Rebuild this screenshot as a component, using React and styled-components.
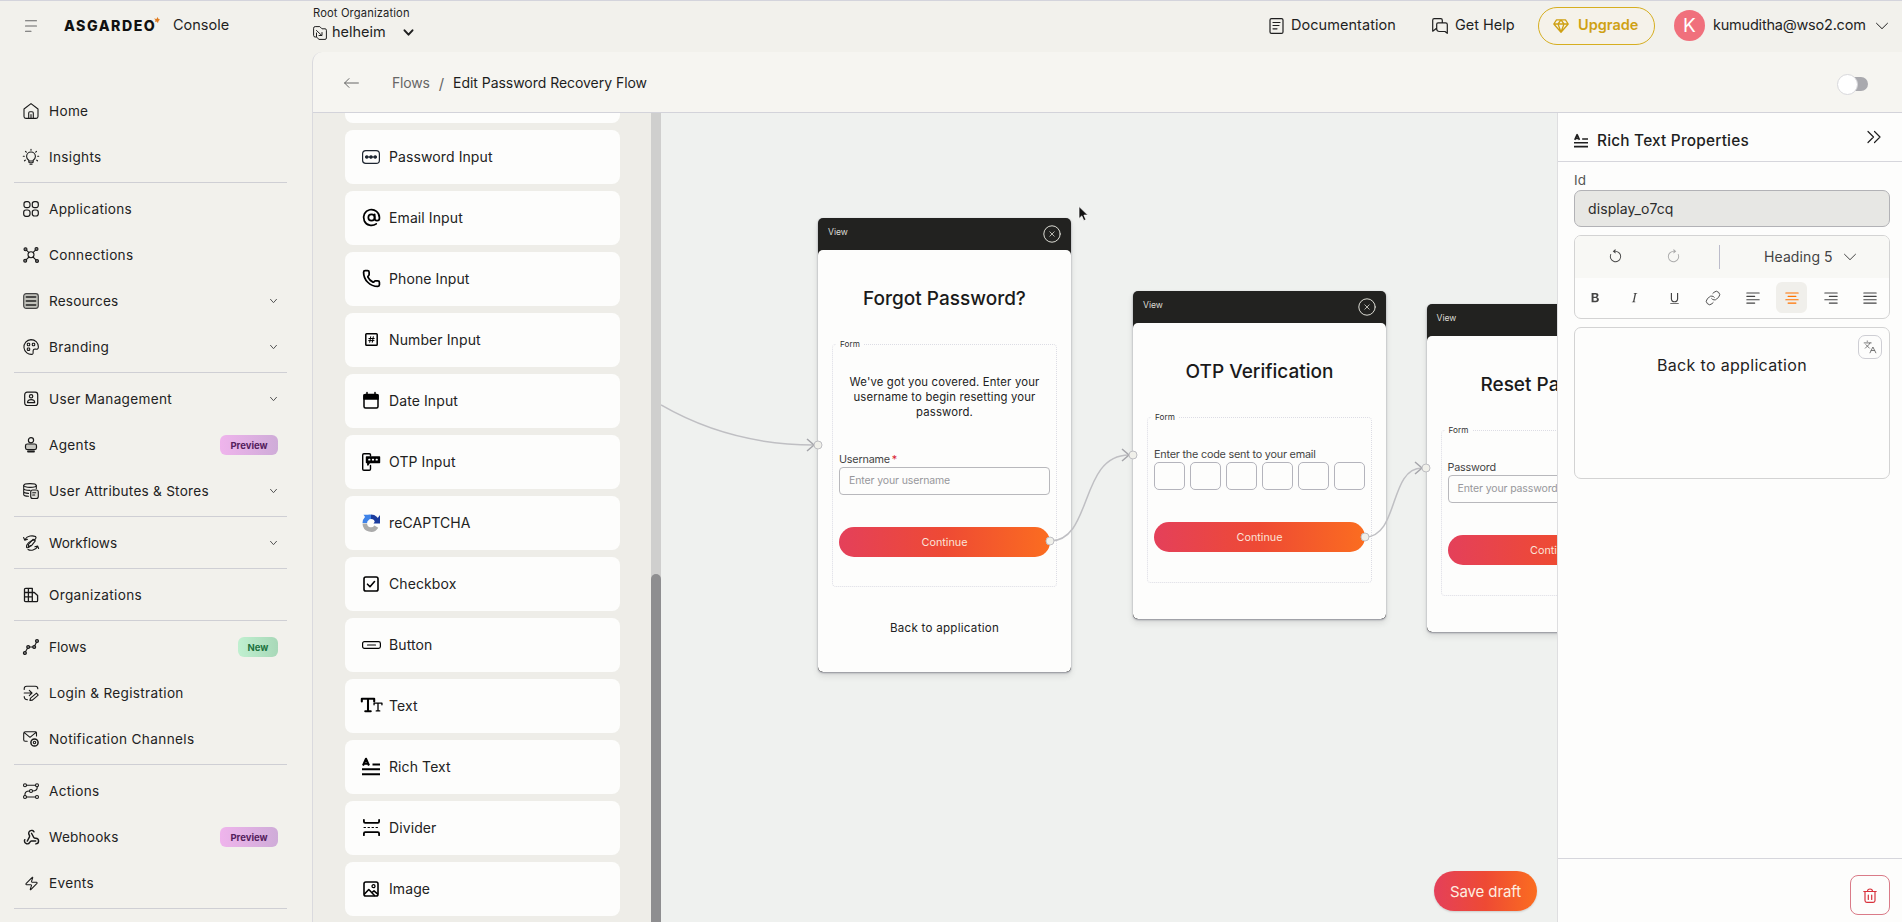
import React from 'react';
import styled, { createGlobalStyle, css } from 'styled-components';
import { Webhook, AtSign, Phone, Zap, Link as LinkIcon, Languages } from 'lucide-react';
import {
  BsArrowCounterclockwise, BsArrowClockwise, BsTypeBold, BsTypeItalic, BsTypeUnderline,
  BsTextLeft, BsTextCenter, BsTextRight, BsJustify,
} from 'react-icons/bs';
import { PiTextTBold } from 'react-icons/pi';

const Global = createGlobalStyle`
  * { box-sizing: border-box; }
  html, body { margin: 0; height: 100%; overflow: hidden; }
  body { font-family: Inter, "Liberation Sans", sans-serif; font-size: 14px; color: #1f1f1f; background: #f2f1ec; }
  #root { height: 100%; }
  svg { display: block; flex: none; overflow: visible; }
`;

const Page = styled.div`
  height: 922px; width: 1902px; display: flex; flex-direction: column;
  background: #f2f1ec; border-top: 1px solid #d4d4dc; overflow: hidden;
`;
const Txt = styled.span`
  white-space: nowrap; line-height: 1.25;
  font-size: ${p => p.$s || 14}px;
  letter-spacing: ${p => p.$ls || 0}px;
  font-weight: ${p => p.$w || 400};
  color: ${p => p.$c || 'inherit'};
`;

/* ---------- header ---------- */
const Header = styled.header`height: 51px; flex: none; display: flex; align-items: center;`;
const Brand = styled.div`width: 313px; display: flex; align-items: center; padding-left: 25px; padding-bottom: 2px;`;
const Logo = styled.div`margin-left: 27px; width: 99px; display: flex; align-items: center; color: #111; svg { margin: -12px 0 0 -2px; }`;
const Console = styled.div`margin-left: 10px; display: flex;`;
const Org = styled.div`width: 110px; display: flex; flex-direction: column; gap: 3px; padding-bottom: 5px;`;
const OrgRow = styled.div`display: flex; align-items: center; gap: 5px; width: 100px; svg:last-child { margin-left: auto; }`;
const HeaderRight = styled.div`margin-left: auto; height: 100%; display: flex; align-items: center; padding: 0 14px 2px 0;`;
const HeaderLink = styled.div`display: flex; align-items: center; gap: 7px; width: ${p => p.$w}px;`;
const Upgrade = styled.div`
  width: 117px; height: 38px; border: 1.5px solid #d6ae20; border-radius: 19px; background: #f5f2ea;
  display: flex; align-items: center; gap: 9px; padding-left: 14px; color: #cfa114;
`;
const Avatar = styled.div`
  width: 31px; height: 31px; margin: 0 8px 0 19px; border-radius: 50%; background: #f0707c; color: #fff;
  display: flex; align-items: center; justify-content: center; font-size: 19px;
`;
const UserMail = styled.div`width: 163px; display: flex;`;

/* ---------- sidebar ---------- */
const Body = styled.div`flex: 1; min-height: 0; display: flex;`;
const Sidebar = styled.nav`width: 312px; flex: none; padding: 36px 25px 0 14px; overflow: hidden;`;
const NavItem = styled.div`
  height: 46px; display: flex; align-items: center; padding: 0 9px; gap: 10px; color: #222;
  > :last-child { ${p => p.$tail && css`margin-left: auto;`} }
`;
const NavIcon = styled.span`width: 16px; height: 16px; display: flex; align-items: center; justify-content: center; color: #191919;`;
const NavRule = styled.div`height: 1px; background: #cfcfd4; margin: 2px 0 3px;`;
const NavCaret = styled.span`width: 8px; color: #555; display: flex;`;
const Badge = styled.span`
  height: 20px; width: ${p => (p.$kind === 'new' ? 40 : 58)}px; border-radius: 6px;
  display: flex; align-items: center; justify-content: center;
  background: ${p => (p.$kind === 'new' ? 'linear-gradient(90deg,#c0f0d0,#a8d8b8)' : 'linear-gradient(90deg,#efb4ec,#cfacd8)')};
  color: ${p => (p.$kind === 'new' ? '#20733f' : '#54205c')};
  font-size: 9.5px; font-weight: 700;
`;

/* ---------- main ---------- */
const Main = styled.main`flex: 1; min-width: 0; display: flex; flex-direction: column; border-left: 1px solid #dadade; border-radius: 10px 0 0 0; background: #f6f5f1;`;
const Crumbs = styled.div`
  height: 61px; flex: none; display: flex; align-items: center; padding: 2px 34px 0 31px;
  border-bottom: 1px solid #d3d3da; color: #666;
`;
const CrumbText = styled.div`display: flex; margin: 0 auto 0 33px; align-items: center;`;
const Slash = styled.span`margin: 0 9px; font-size: 15px;`;
const Toggle = styled.div`width: 31px; height: 20px; display: flex; align-items: center; justify-content: flex-end; margin-top: 2px;`;
const Track = styled.div`width: 22px; height: 14px; border-radius: 0 7px 7px 0; background: #a9a9ae; display: flex; align-items: center;`;
const Knob = styled.div`width: 21px; height: 21px; flex: none; border-radius: 50%; background: #fff; border: 1px solid #d8d8dc; margin-left: -9px;`;
const Work = styled.div`flex: 1; min-height: 0; display: flex;`;

const Palette = styled.div`
  width: 338px; flex: none; background: #eeede8; padding: 0 31px 0 32px; overflow: hidden;
  display: flex; flex-direction: column; gap: 7px; justify-content: flex-end; padding-bottom: 6px;
`;
const Tile = styled.div`
  height: 54px; flex: none; border-radius: 8px; background: #fdfdfc; display: flex; align-items: center;
  padding: 0 0 0 16px; gap: 8px; color: #222;
`;
const TileIcon = styled.span`width: 20px; margin-top: -1px; display: flex; justify-content: center; color: #000;`;
const Rail = styled.div`width: 10px; flex: none; background: #cfcfce; display: flex; flex-direction: column; justify-content: flex-end;`;
const Thumb = styled.div`height: 348px; border-radius: 5px 5px 0 0; background: #8e8e90;`;

/* ---------- canvas ---------- */
const Canvas = styled.div`flex: 1; min-width: 0; position: relative; overflow: hidden; background: #eff1ef;`;
const Edges = styled.svg`position: absolute; left: 0; top: 0; z-index: 2;`;
const Node = styled.div`
  position: absolute; left: ${p => p.$x}px; top: ${p => p.$y}px; width: 253px; height: ${p => p.$h}px;
  border-radius: 5px; background: #222220; box-shadow: 0 1px 2px rgba(60,60,80,.5), 0 4px 6px rgba(60,60,60,.12);
  display: flex; flex-direction: column; overflow: hidden;
`;
const NodeHead = styled.div`
  height: 32px; flex: none; display: flex; align-items: center; justify-content: space-between; padding: 0 10px; color: #dcdcd4;
  span { margin-top: -4px; }
`;
const NodeBody = styled.div`flex: 1; background: #fdfdfc; border-radius: 5px; padding: 35px 14px 0; display: flex; flex-direction: column;`;
const Title = styled.div`height: 28px; line-height: 28px; text-align: center; font-size: 19px; font-weight: 500; color: #1a1a1a; white-space: nowrap;`;
const Form = styled.div`
  margin-top: 31px; height: ${p => p.$h}px; border: 1px dotted #dcdce4; border-radius: 4px;
  padding: 0 6px; display: flex; flex-direction: column; flex: none;
`;
const Legend = styled.div`align-self: flex-start; height: 12px; line-height: 12px; margin: -7px 0 0 -3px; padding: 0 4px; font-size: 8.2px; background: #fdfdfc; color: #333;`;
const Blurb = styled.p`margin: 25px -3px 33px; text-align: center; font-size: 11.3px; line-height: 15px; letter-spacing: .17px; color: #222; white-space: pre;`;
const Label = styled.div`height: 14px; line-height: 14px; font-size: 10.8px; color: #444; margin-top: ${p => p.$mt || 0}px; white-space: nowrap; letter-spacing: -.2px; i { color: #d8232f; font-style: normal; margin-left: 2px; }`;
const Input = styled.div`
  height: 28px; flex: none; border: 1px solid #b8b8bc; border-radius: 4px; padding-left: 9px; font-size: 10.5px;
  line-height: 26px; color: #97979b; letter-spacing: -.12px;
`;
const Digits = styled.div`height: 28px; flex: none; display: flex; justify-content: space-between;`;
const Digit = styled.div`width: 31px; border: 1px solid #b4b4bc; border-radius: 5px;`;
const Continue = styled.div`
  height: 30px; flex: none; margin-top: 32px; border-radius: 15px; color: #fbe3d8; font-size: 10.8px;
  display: flex; align-items: center; justify-content: center; background: linear-gradient(90deg, #e4405a 0%, #ee4a34 50%, #fb6d20 100%);
`;
const BackText = styled.div`margin-top: 34px; text-align: center; font-size: 11.6px; letter-spacing: .26px; line-height: 14px; color: #222;`;
const SaveDraft = styled.div`
  position: absolute; right: 20px; bottom: 11px; width: 103px; height: 40px; border-radius: 20px; z-index: 3;
  display: flex; align-items: center; justify-content: center; color: #fdeee0; font-size: 15px; letter-spacing: -.1px;
  background: linear-gradient(90deg, #e4405a 0%, #ee4a34 50%, #fb6d20 100%); box-shadow: 0 1px 2px rgba(0,0,0,.15);
`;
const Pointer = styled.svg`position: absolute; left: 417px; top: 93px; z-index: 4;`;

/* ---------- properties ---------- */
const Panel = styled.aside`width: 345px; flex: none; background: #fdfdfc; border-left: 1px solid #dedee0; display: flex; flex-direction: column;`;
const PanelHead = styled.div`
  height: 49px; flex: none; border-bottom: 1px solid #d6d6dc; display: flex; align-items: center; gap: 9px; padding: 8px 21px 0 16px;
  > :last-child { margin: -8px 0 0 auto; }
`;
const PanelBody = styled.div`flex: 1; padding: 10px 12px 0 16px; display: flex; flex-direction: column;`;
const ReadOnly = styled.div`height: 37px; margin-top: 1px; border: 1px solid #b2b2b6; border-radius: 7px; background: #e7e7e4; display: flex; align-items: center; padding: 0 0 0 13px; color: #2c2c2c;`;
const Toolbar = styled.div`margin-top: 8px; border: 1px solid #d3d3d3; border-radius: 7px; overflow: hidden;`;
const ToolRowA = styled.div`
  height: 42px; background: #f8f8f5; display: flex; align-items: center; padding-left: 33px; color: #444;
  svg { margin-right: 43px; } svg:last-child { margin: 0 0 0 11px; }
`;
const ToolSep = styled.i`width: 1px; height: 24px; background: #bcbccb; margin: 0 44px 0 -5px;`;
const ToolRowB = styled.div`height: 40px; display: flex; align-items: center; justify-content: space-between; padding: 0 3px 0 5px;`;
const Tool = styled.span`
  width: 31px; height: 31px; border-radius: 6px; display: flex; align-items: center; justify-content: center;
  color: ${p => (p.$on ? '#ff7300' : '#444')}; background: ${p => (p.$on ? '#f0efeb' : 'transparent')};
`;
const Editor = styled.div`height: 152px; margin-top: 8px; border: 1px solid #d3d3d3; border-radius: 7px; display: flex; justify-content: center; padding-top: 27px; position: relative;`;
const Translate = styled.div`
  position: absolute; right: 7px; top: 7px; width: 24px; height: 24px; border: 1px solid #ceced4; border-radius: 7px;
  display: flex; align-items: center; justify-content: center; color: #666; svg { transform: scaleY(-1) rotate(180deg) scaleX(1); }
`;
const PanelFoot = styled.div`height: 64px; flex: none; border-top: 1px solid #d6d6dc; display: flex; justify-content: flex-end; align-items: flex-start; padding: 16px 12px 0;`;
const Trash = styled.div`width: 40px; height: 40px; border: 1px solid #da7b88; border-radius: 8px; display: flex; align-items: center; justify-content: center; color: #d8323c;`;

/* ---------- icons ---------- */
const Svg = ({ s = 16, w = s, h = s, vb, sw = 1.1, children, ...r }) => (
  <svg width={w} height={h} viewBox={vb || `0 0 ${w} ${h}`} fill="none" stroke="currentColor" strokeWidth={sw} strokeLinecap="round" strokeLinejoin="round" {...r}>{children}</svg>
);
const Caret = ({ w = 7, h = 4, sw = 1 }) => <Svg w={w} h={h} sw={sw}><path d={`M.5 .3 L${w / 2} ${h - 0.3} L${w - 0.5} .3`} /></Svg>;

const icons = {
  home: <Svg><path d="M1 6 8 .6 15 6v7.500q0 1.900-1.900 1.900H2.900Q1 15.400 1 13.500ZM5.700 15.200V10q0-1.200 1.200-1.200h2.200q1.200 0 1.200 1.200v5.200M8 11.500v3.500" /></Svg>,
  bulb: <Svg><path d="M5.800 11.300C4.300 10.200 3.600 9 3.600 7.400a4.400 4.400 0 0 1 8.800 0c0 1.600-.7 2.800-2.200 3.900v1.500q0 1-1 1H6.800q-1 0-1-1ZM6 12h4M8 .3v1M2.500 2.300l.8.8M13.500 2.300l-.8.8M.3 7.200h1M14.700 7.200h1M1.500 11.800l.8-.6M14.500 11.800l-.8-.6M7 15.300h2" /></Svg>,
  apps: <Svg sw={1.2}><rect x="1" y=".7" width="6" height="6" rx="2.200" /><rect x="9.300" y=".7" width="6" height="6" rx="2.200" /><rect x=".7" y="9" width="6.300" height="6.300" rx="2.200" /><rect x="9.300" y="9" width="6" height="6" rx="2.200" /></Svg>,
  connections: <Svg><circle cx="8" cy="7.800" r="3" /><circle cx="2.500" cy="2.200" r="1.500" fill="#777" /><circle cx="13.500" cy="2" r="1.500" fill="#777" /><circle cx="2.200" cy="13.800" r="1.500" fill="#777" /><circle cx="14" cy="14" r="1.500" fill="#777" /><path d="M3.600 3.300 6 5.700M12.400 3.100 10 5.600M3.300 12.700 6 10M12.900 12.900 10 10" /></Svg>,
  resources: <Svg sw={1.2}><rect x=".7" y=".7" width="14.600" height="14.600" rx="2.500" fill="#c2c2bb" stroke="#444" /><path d="M3.300 4h9.400M3.300 8h9.400M3.300 12h9.400" stroke="#222" strokeWidth="1.500" /></Svg>,
  branding: <Svg><path d="M8 .6A7.400 7.400 0 1 0 9.500 15.300c1-.4.6-1.800.6-3 0-1.600.8-2.400 2.400-2.200 1.500.3 2.900.1 2.900-2.100C15.400 3.600 12 .6 8 .6Z" /><rect x="4.300" y="4.300" width="2.400" height="2.400" rx=".7" /><rect x="9.300" y="4.300" width="2.400" height="2.400" rx=".7" /><rect x="4.300" y="9" width="2.400" height="2.400" rx=".7" /></Svg>,
  user: <Svg sw={1.2}><rect x="1.700" y="1.200" width="13" height="13.300" rx="2.500" /><circle cx="8.100" cy="5.300" r="1.700" /><path d="M4.500 11.600c0-4.100 7.200-4.100 7.200 0Z" /></Svg>,
  agent: <Svg sw={1.2}><circle cx="8" cy="3.300" r="2.600" /><rect x="2.500" y="7" width="11" height="5.600" rx="1.800" fill="#c6c6c0" /><path d="M5 14.500h6" strokeWidth="1.800" /></Svg>,
  stores: <Svg><ellipse cx="7" cy="2.500" rx="6.300" ry="1.900" /><path d="M.7 2.500v9c0 1 2 1.700 4.800 1.800M13.300 2.500v3M.7 5.500c0 1 2.600 1.900 6.300 1.900M.7 8.600c0 1 2 1.700 4.800 1.800" /><rect x="7.700" y="7" width="7.600" height="8.500" rx="2" fill="#deded8" /><path d="M9.700 9.700h3M9.700 12h2" /></Svg>,
  workflows: <Svg><path d="M2 4.500C4.500.5 9.500.3 12.500 1.500 14 3 12 5 10 5.300 7 6 3 9.500 3.500 12c.4 1.500 3 .5 4-1.500M14.500 11.500c-1.800 4-7 4.500-9.500 3M.6 2.500 1.800 5.200l2.700-.9M15.600 13.500l-1-2.500-2.700.8" /><path d="M5.500 9.500 10 4.300l2.300 1.500-4 5-3 .8Z" /></Svg>,
  orgs: <Svg sw={1.3}><path d="M1.500 2.500q0-1.200 1.200-1.200h6.600v13.400H2.700q-1.200 0-1.200-1.200ZM9.300 5.500h2l3.300 3v5q0 1.200-1.200 1.200H9.300M1.500 5.500h7.800M1.500 9.800h7.800M5.400 1.300v13.400" /></Svg>,
  flows: <Svg><circle cx="1.900" cy="14" r="1.500" fill="#777" /><circle cx="5.200" cy="8" r="1.500" fill="#777" /><circle cx="11.200" cy="8" r="1.500" fill="#777" /><circle cx="14" cy="2" r="1.500" fill="#777" /><path d="M2.600 12.600 4.500 9.300M6.700 8h3M11.800 6.600l1.600-3.200" /></Svg>,
  login: <Svg><path d="M1.200 4.500V3.800q0-2.500 2.500-2.500h8.600q2.500 0 2.500 2.500M1.200 11.500q0 3 3.300 3.200M1.200 8h7.500M6.300 5.300 9 8l-2.700 2.700M7.500 13.200l6-5 1.700 2-5.800 4.900-2.500.4Z" /></Svg>,
  notify: <Svg><path d="M13.500 5V1.800q0-1-1-1h-10q-1.800 0-1.800 1.700v6.200q0 1.500 1.500 1.500h2M1 1.300l6 5 6-5" /><circle cx="11.500" cy="11.500" r="3.600" strokeWidth="1.500" /><circle cx="11.500" cy="11.500" r="1.200" /></Svg>,
  actions: <Svg><circle cx="2" cy="2.200" r="1.500" /><circle cx="14" cy="2.200" r="1.500" /><circle cx="8" cy="8" r="1.500" /><circle cx="2" cy="14" r="1.500" /><circle cx="14" cy="14" r="1.500" /><path d="M3.500 2.200h9M14.200 3.700c.3 3-1.500 4.300-4.700 4.300M6.500 8C3 8 1.700 9.500 1.900 12.500M3.500 14h9" /></Svg>,
  webhooks: <Webhook size={17} strokeWidth={2} />,
  events: <Zap size={15} strokeWidth={1.7} />,
};

const RichIcon = ({ w = 18 }) => (
  <Svg w={w} h={w} vb="0 0 18 18" sw={2.100} strokeLinecap="butt">
    <path d="M1 7.500 4 .8 7 7.500M2 5.700h4M10.500 6.500H18M0 11.200h18M0 16.300h18" />
  </Svg>
);

const tileIcons = {
  password: <Svg w={18} h={14} sw={1.200} style={{ color: '#1d2530' }}><rect x=".6" y=".6" width="16.800" height="12.800" rx="3.200" /><path d="M3.500 7h11" strokeWidth="1" /><circle cx="4.800" cy="7" r="1.200" fill="currentColor" /><circle cx="9" cy="7" r="1.200" fill="currentColor" /><circle cx="13.200" cy="7" r="1.200" fill="currentColor" /></Svg>,
  email: <AtSign size={19} strokeWidth={2.200} />,
  phone: <Phone size={19} strokeWidth={2.200} />,
  number: <Svg s={13} sw={1.500}><rect x=".8" y=".8" width="11.400" height="11.400" rx=".8" /><path d="M5.700 3.700 4.700 9.300M8.300 3.700 7.300 9.300M3.900 5.500h5.300M3.700 7.600H9" strokeWidth="1" /></Svg>,
  date: <Svg w={16} h={17} sw={1.500}><rect x="1" y="2.500" width="14" height="13.500" rx="1.500" /><path d="M1 3h14v4H1z" fill="currentColor" /><path d="M4 .5v3M12 .5v3" /></Svg>,
  otp: <Svg s={18} sw={1.400}><path d="M8.500 3V2q0-1.200-1.200-1.200H1.900Q.7.800.7 2v14q0 1.200 1.200 1.200h5.400q1.200 0 1.200-1.200v-3.500" /><path d="M4.500 4h13v5.500H7.500L5.800 12V9.500H4.500Z" fill="currentColor" /><path d="M7 6.700h.6M10.700 6.700h.6M14.400 6.700h.6" stroke="#fff" strokeWidth="1.700" /></Svg>,
  captcha: <Svg s={18} sw={4.600} strokeLinecap="butt"><path d="M2.800 9A6.200 6.200 0 0 1 9 2.800" stroke="#3f83e8" /><path d="M9 2.800A6.200 6.200 0 0 1 15.200 9" stroke="#1b3c9e" /><path d="M2.800 9.500A6.200 6.200 0 0 0 14.300 12.600" stroke="#ababab" /><path d="M18 1v8.500h-6.500Z" fill="#1b3c9e" stroke="none" /><path d="M1.500.8H8L6 7Z" fill="#3f83e8" stroke="none" /></Svg>,
  check: <Svg s={16} sw={1.600}><rect x="1" y="1" width="14" height="14" rx="1.800" /><path d="m4.500 8.200 2.500 2.500 4.500-5.200" /></Svg>,
  button: <Svg w={19} h={8} sw={1.200}><rect x=".6" y=".6" width="17.800" height="6.800" rx="1.800" /><path d="M5.500 4h8" /></Svg>,
  rich: <RichIcon />,
  divider: <Svg s={17} sw={1.800}><path d="M.9.800v1.700q0 1.300 1.300 1.300h12.600q1.300 0 1.300-1.300V.8M.9 16.200v-1.700q0-1.300 1.300-1.300h12.600q1.300 0 1.300 1.300v1.700" /><path d="M1 8.500h15.500" strokeWidth="1" strokeDasharray="1.500 2.500" /></Svg>,
  image: <Svg s={16} sw={1.600}><rect x="1" y="1" width="14" height="14" rx="1.800" /><circle cx="10.500" cy="5.200" r="1.500" strokeWidth="1.300" /><path d="m1.500 13 4.300-4.500 5.700 6M9 11.500l2-1.700 3.500 3" /></Svg>,
};
const TextIcon = styled.span`display: flex; align-items: flex-end; margin: -2px 0 0 -4px; svg + svg { margin: 0 -3px 2px -8px; }`;

const nav = [
  ['home', 'Home'], ['bulb', 'Insights'], null,
  ['apps', 'Applications'], ['connections', 'Connections'], ['resources', 'Resources', 'caret', 0.2], ['branding', 'Branding', 'caret'], null,
  ['user', 'User Management', 'caret'], ['agent', 'Agents', 'preview'], ['stores', 'User Attributes & Stores', 'caret', 0.25], null,
  ['workflows', 'Workflows', 'caret', 0], null, ['orgs', 'Organizations'], null,
  ['flows', 'Flows', 'new', 0], ['login', 'Login & Registration'], ['notify', 'Notification Channels', undefined, 0.37], null,
  ['actions', 'Actions'], ['webhooks', 'Webhooks', 'preview', 0.2], ['events', 'Events'], null,
];
const tiles = [
  ['password', 'Password Input'], ['email', 'Email Input'], ['phone', 'Phone Input'], ['number', 'Number Input'],
  ['date', 'Date Input'], ['otp', 'OTP Input'], ['captcha', 'reCAPTCHA'], ['check', 'Checkbox'], ['button', 'Button'],
  ['text', 'Text'], ['rich', 'Rich Text'], ['divider', 'Divider'], ['image', 'Image'],
];

const ViewNode = ({ x, y, h, children }) => (
  <Node $x={x} $y={y} $h={h}>
    <NodeHead><Txt $s={8.6}>View</Txt>
      <Svg s={18} sw={1}><circle cx="9" cy="9" r="8.200" /><path d="m6.800 6.800 4.400 4.400M11.200 6.800l-4.400 4.400" strokeWidth=".8" /></Svg>
    </NodeHead>
    <NodeBody>{children}</NodeBody>
  </Node>
);

export default function App() {
  return (
    <Page>
      <Global />
      <Header>
        <Brand>
          <Svg s={12} sw={1.100} style={{ color: '#666' }}><path d="M.5.800h11M.5 6h11M.5 11.200h5.500" /></Svg>
          <Logo>
            <Txt $s={14.2} $w={800} $ls={1.5}>ASGARDEO</Txt>
            <svg width="6" height="6" viewBox="0 0 6 6"><path d="M0 1.500 2.500 2 3.500 0 4.500 2 6 2.500 4.500 4 4 6 2.500 4.500 1 5 1.500 3Z" fill="#e07b1d" /></svg>
          </Logo>
          <Console><Txt $s={14.5}>Console</Txt></Console>
        </Brand>
        <Org>
          <Txt $s={11.2} $ls={0.13}>Root Organization</Txt>
          <OrgRow>
            <Svg s={14} sw={1}><path d="M3.500 11H2.200Q.6 11 .6 9.400V2.200Q.6.600 2.200.6h4.600L9 2.800h3q1.400 0 1.400 1.400v7.800q0 1.400-1.400 1.400H6L3.500 11V7M3.500 4.500 8.800 9.500M9 6.500v3H6" /></Svg>
            <Txt $s={14.5}>helheim</Txt>
            <Caret w={9} h={5} sw={2} />
          </OrgRow>
        </Org>
        <HeaderRight>
          <HeaderLink $w={163}>
            <Svg w={15} h={16} sw={1.200}><rect x="1" y=".6" width="13" height="14.800" rx="1.500" /><path d="M4 4.500h7M4 7.500h6M4 10.800h4" /></Svg>
            <Txt $s={14.5} $ls={0.05}>Documentation</Txt>
          </HeaderLink>
          <HeaderLink $w={106}>
            <Svg w={16} h={16} sw={1.200}><path d="M3 11.500.7 13.200V2.200Q.7.700 2.200.7h6.600q1.500 0 1.500 1.500v2M3 11.500l1.500-1.200M6 4.800h7.500q1.800 0 1.800 1.800v8.700L13 13.500H7.500Q4.700 13.500 4.700 11V6.300Q4.700 4.800 6 4.800" /></Svg>
            <Txt $s={14.5}>Get Help</Txt>
          </HeaderLink>
          <Upgrade>
            <Svg w={16} h={14} sw={1.300}><path d="M3.500.8h9L15.200 5 8 13.300.8 5ZM.8 5h14.400M5 5l3 8 3-8L8 .8 5 5" /></Svg>
            <Txt $s={14.5} $w={600}>Upgrade</Txt>
          </Upgrade>
          <Avatar>K</Avatar>
          <UserMail><Txt $s={14.5} $ls={-0.22}>kumuditha@wso2.com</Txt></UserMail>
          <Caret w={12} h={6} />
        </HeaderRight>
      </Header>
      <Body>
        <Sidebar>
          {nav.map((n, i) => n ? (
            <NavItem key={i} $tail={!!n[2]}>
              <NavIcon>{icons[n[0]]}</NavIcon>
              <Txt $s={13.6} $ls={n[3] ?? 0.32}>{n[1]}</Txt>
              {n[2] === 'caret' && <NavCaret><Caret /></NavCaret>}
              {n[2] === 'preview' && <Badge>Preview</Badge>}
              {n[2] === 'new' && <Badge $kind="new">New</Badge>}
            </NavItem>
          ) : <NavRule key={i} />)}
        </Sidebar>
        <Main>
          <Crumbs>
            <Svg w={15} h={10} sw={1}><path d="M.6 5h13.800M5 .6.6 5 5 9.400" /></Svg>
            <CrumbText><Txt $ls={-0.2}>Flows</Txt><Slash>/</Slash><Txt $c="#1d1d1d" $ls={-0.04}>Edit Password Recovery Flow</Txt></CrumbText>
            <Toggle><Track><Knob /></Track></Toggle>
          </Crumbs>
          <Work>
            <Palette>
              <Tile />
              {tiles.map(([k, t]) => (
                <Tile key={k}>
                  <TileIcon>{k === 'text' ? <TextIcon><PiTextTBold size={22} /><PiTextTBold size={14} /></TextIcon> : tileIcons[k]}</TileIcon>
                  <Txt $ls={0.1}>{t}</Txt>
                </Tile>
              ))}
            </Palette>
            <Rail><Thumb /></Rail>
            <Canvas>
              <ViewNode x={157} y={105} h={454}>
                <Title>Forgot Password?</Title>
                <Form $h={243}>
                  <Legend>Form</Legend>
                  <Blurb>{"We've got you covered. Enter your\nusername to begin resetting your\npassword."}</Blurb>
                  <Label>Username<i>*</i></Label>
                  <Input>Enter your username</Input>
                  <Continue>Continue</Continue>
                </Form>
                <BackText>Back to application</BackText>
              </ViewNode>
              <ViewNode x={472} y={178} h={328}>
                <Title>OTP Verification</Title>
                <Form $h={166}>
                  <Legend>Form</Legend>
                  <Label $mt={25}>Enter the code sent to your email</Label>
                  <Digits>{[0, 1, 2, 3, 4, 5].map(i => <Digit key={i} />)}</Digits>
                  <Continue>Continue</Continue>
                </Form>
              </ViewNode>
              <ViewNode x={765.5} y={191} h={328}>
                <Title>Reset Password</Title>
                <Form $h={166}>
                  <Legend>Form</Legend>
                  <Label $mt={25}>Password</Label>
                  <Input>Enter your password</Input>
                  <Continue>Continue</Continue>
                </Form>
              </ViewNode>
              <Edges width="896" height="809" fill="none" stroke="#bfbfc3" strokeWidth="1.5">
                <path d="M0 292C45 318 95 332 153 332M389 428C432 428 418 342 468 342M704 424C738 424 728 355 761 355" />
                <path d="m146 326 7 6-7 6M461 336l7 6-7 6M754 349l7 6-7 6" stroke="#a5a5aa" />
                <g fill="#f0f0ea" strokeWidth="1"><circle cx="157" cy="332" r="4" /><circle cx="389" cy="428" r="4" /><circle cx="472" cy="342" r="4" /><circle cx="704" cy="424" r="4" /><circle cx="765" cy="355" r="4" /></g>
              </Edges>
              <SaveDraft>Save draft</SaveDraft>
              <Pointer width="11" height="16" viewBox="0 0 11 16"><path d="M1 .5v12l2.800-2.600 2 4.700 2.100-.9-2-4.600h3.900Z" fill="#111" stroke="#fff" strokeWidth=".7" /></Pointer>
            </Canvas>
            <Panel>
              <PanelHead>
                <RichIcon w={14} />
                <Txt $s={15.4} $w={500} $ls={0.2}>Rich Text Properties</Txt>
                <Svg w={14} h={12} sw={1.200}><path d="m1 .5 5.500 5.500L1 11.500M7.500.500 13 6l-5.500 5.500" /></Svg>
              </PanelHead>
              <PanelBody>
                <Txt $s={13.500} $c="#555">Id</Txt>
                <ReadOnly><Txt $ls={0.1}>display_o7cq</Txt></ReadOnly>
                <Toolbar>
                  <ToolRowA>
                    <BsArrowCounterclockwise size={15} />
                    <BsArrowClockwise size={15} color="#aaa" />
                    <ToolSep />
                    <Txt $s={14} $ls={0.1}>Heading 5</Txt>
                    <Caret w={12} h={6} />
                  </ToolRowA>
                  <ToolRowB>
                    <Tool><BsTypeBold size={15} /></Tool>
                    <Tool><BsTypeItalic size={15} /></Tool>
                    <Tool><BsTypeUnderline size={15} /></Tool>
                    <Tool><LinkIcon size={16} strokeWidth={1.400} /></Tool>
                    <Tool><BsTextLeft size={18} /></Tool>
                    <Tool $on><BsTextCenter size={18} /></Tool>
                    <Tool><BsTextRight size={18} /></Tool>
                    <Tool><BsJustify size={18} /></Tool>
                  </ToolRowB>
                </Toolbar>
                <Editor>
                  <Txt $s={16} $ls={0.33}>Back to application</Txt>
                  <Translate><Languages size={14} strokeWidth={1.500} style={{ transform: 'none' }} /></Translate>
                </Editor>
              </PanelBody>
              <PanelFoot>
                <Trash><Svg w={14} h={15} sw={1.200}><path d="M.8 3.500h12.400M2 3.500v9q0 1.800 1.800 1.800h6.400q1.800 0 1.800-1.800v-9M4.500 3.300Q4.500 1 7 1t2.500 2.300M5.300 7v4.500M8.700 7v4.500" /></Svg></Trash>
              </PanelFoot>
            </Panel>
          </Work>
        </Main>
      </Body>
    </Page>
  );
}
